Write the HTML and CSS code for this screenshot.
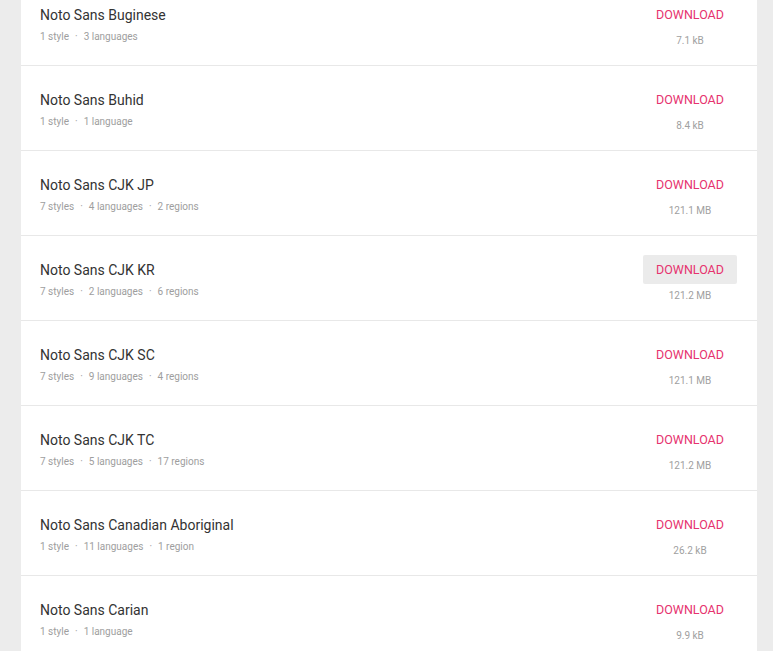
FILE: index.html
```html
<!DOCTYPE html>
<html>
<head>
  <title>Noto fonts</title>
  <meta charset="utf-8" />
  <link rel="stylesheet" href="styles.css">
</head>
<body>
<div class="list">
  <div class="row">
    <div class="info">
      <div class="name">Noto Sans Buginese</div>
      <div class="meta">1 style<span class="dot">·</span>3 languages</div>
    </div>
    <div class="get">
      <a class="btn">Download</a>
      <div class="size">7.1 kB</div>
    </div>
  </div>
  <div class="row">
    <div class="info">
      <div class="name">Noto Sans Buhid</div>
      <div class="meta">1 style<span class="dot">·</span>1 language</div>
    </div>
    <div class="get">
      <a class="btn">Download</a>
      <div class="size">8.4 kB</div>
    </div>
  </div>
  <div class="row">
    <div class="info">
      <div class="name">Noto Sans CJK JP</div>
      <div class="meta">7 styles<span class="dot">·</span>4 languages<span class="dot">·</span>2 regions</div>
    </div>
    <div class="get">
      <a class="btn">Download</a>
      <div class="size">121.1 MB</div>
    </div>
  </div>
  <div class="row">
    <div class="info">
      <div class="name">Noto Sans CJK KR</div>
      <div class="meta">7 styles<span class="dot">·</span>2 languages<span class="dot">·</span>6 regions</div>
    </div>
    <div class="get">
      <a class="btn hover">Download</a>
      <div class="size">121.2 MB</div>
    </div>
  </div>
  <div class="row">
    <div class="info">
      <div class="name">Noto Sans CJK SC</div>
      <div class="meta">7 styles<span class="dot">·</span>9 languages<span class="dot">·</span>4 regions</div>
    </div>
    <div class="get">
      <a class="btn">Download</a>
      <div class="size">121.1 MB</div>
    </div>
  </div>
  <div class="row">
    <div class="info">
      <div class="name">Noto Sans CJK TC</div>
      <div class="meta">7 styles<span class="dot">·</span>5 languages<span class="dot">·</span>17 regions</div>
    </div>
    <div class="get">
      <a class="btn">Download</a>
      <div class="size">121.2 MB</div>
    </div>
  </div>
  <div class="row">
    <div class="info">
      <div class="name">Noto Sans Canadian Aboriginal</div>
      <div class="meta">1 style<span class="dot">·</span>11 languages<span class="dot">·</span>1 region</div>
    </div>
    <div class="get">
      <a class="btn">Download</a>
      <div class="size">26.2 kB</div>
    </div>
  </div>
  <div class="row">
    <div class="info">
      <div class="name">Noto Sans Carian</div>
      <div class="meta">1 style<span class="dot">·</span>1 language</div>
    </div>
    <div class="get">
      <a class="btn">Download</a>
      <div class="size">9.9 kB</div>
    </div>
  </div>
</div>
</body>
</html>
```

FILE: styles.css
```css
html, body {
  height: 100%;
  overflow: hidden;
}

body {
  margin: 0;
  background: #ececec;
  font-family: Roboto, 'Noto Sans', sans-serif;
}

.list {
  width: 736px;
  margin: -19px 0 0 21px;
  background: #fff;
}

.row {
  display: flex;
  justify-content: space-between;
  height: 84px;
  padding: 0 20px 0 19px;
  border-bottom: 1px solid #e8e8e8;
}

.info {
  padding-top: 24px;
}

.name {
  font-size: 14px;
  line-height: 20px;
  color: #333;
}

.meta {
  margin-top: 5px;
  font-size: 10px;
  line-height: 14px;
  color: #9e9e9e;
}

.dot {
  margin: 0 6px;
}

.get {
  width: 94px;
  padding-top: 19px;
  text-align: center;
}

.btn {
  display: block;
  height: 29px;
  line-height: 29px;
  font-size: 12.5px;
  text-transform: uppercase;
  color: #e6336f;
  border-radius: 2px;
  cursor: pointer;
}

.btn.hover {
  background: #ebebeb;
}

.size {
  margin-top: 5px;
  font-size: 10px;
  line-height: 14px;
  color: #a0a0a0;
}
```
